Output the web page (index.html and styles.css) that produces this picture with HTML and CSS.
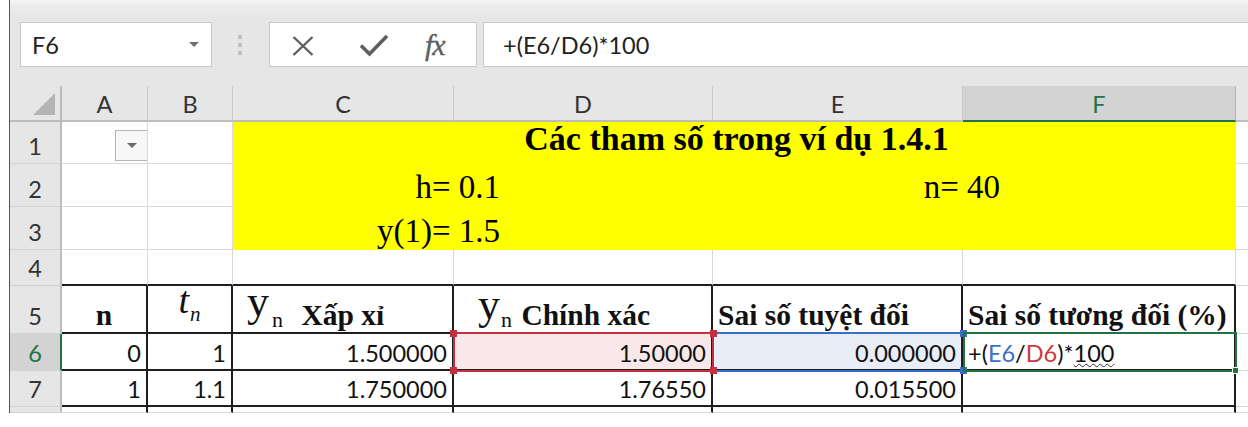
FILE: index.html
```html
<!DOCTYPE html>
<html lang="vi">
<head>
<meta charset="utf-8">
<title>Sai số tương đối</title>
<link rel="stylesheet" href="styles.css">
</head>
<body>
<div class="app">
  <div class="fbar">
    <div class="namebox"><span class="nb-text">F6</span><span class="nb-arrow"></span></div>
    <div class="grip"><i></i><i></i><i></i></div>
    <div class="fnbox">
      <svg class="ic-x" width="24" height="22" viewBox="0 0 24 22"><path d="M2.5 2 L21.5 20 M21.5 2 L2.5 20"/></svg>
      <svg class="ic-ok" width="30" height="24" viewBox="0 0 30 24"><path d="M2 12.5 L10.5 21 L28 3"/></svg>
      <span class="fx">fx</span>
    </div>
    <div class="formula">+(E6/D6)*100</div>
  </div>
  <div class="sheet">
    <div class="corner"><span class="tri"></span></div>
    <div class="ch">A</div>
    <div class="ch">B</div>
    <div class="ch">C</div>
    <div class="ch">D</div>
    <div class="ch">E</div>
    <div class="ch sel">F</div>
    <div class="ch"></div>

    <div class="rh">1</div>
    <div class="c dd-cell"><span class="dd"><span class="dd-tri"></span></span></div>
    <div class="c"></div>
    <div class="yellow">
      <div class="y-title">Các tham số trong ví dụ 1.4.1</div>
      <div class="y-cell">h= 0.1</div>
      <div class="y-cell">n= 40</div>
      <div class="y-cell y-low">y(1)= 1.5</div>
    </div>
    <div class="c"></div>

    <div class="rh">2</div>
    <div class="c"></div>
    <div class="c"></div>
    <div class="c"></div>

    <div class="rh">3</div>
    <div class="c"></div>
    <div class="c"></div>
    <div class="c"></div>

    <div class="rh">4</div>
    <div class="c bb"></div>
    <div class="c bb"></div>
    <div class="c bb"></div>
    <div class="c bb"></div>
    <div class="c bb"></div>
    <div class="c bb"></div>
    <div class="c"></div>

    <div class="rh">5</div>
    <div class="c bb br hd center"><span class="txt"><b>n</b></span></div>
    <div class="c bb br hd center"><span class="txt"><span class="t-it">t</span><span class="t-sub">n</span></span></div>
    <div class="c bb br hd left pad-y"><span class="txt"><span class="ybig">y</span><span class="ysub ysub-wide">n</span> <b>Xấp xỉ</b></span></div>
    <div class="c bb br hd left pad-y2"><span class="txt"><span class="ybig ybig2">y</span><span class="ysub">n</span> <b>Chính xác</b></span></div>
    <div class="c bb br hd left"><span class="txt"><b>Sai số tuyệt đối</b></span></div>
    <div class="c bb br hd left"><span class="txt"><b>Sai số tương đối (%)</b></span></div>
    <div class="c"></div>

    <div class="rh sel">6</div>
    <div class="c bb br">0</div>
    <div class="c bb br">1</div>
    <div class="c bb br">1.500000</div>
    <div class="c bb br pink">1.50000</div>
    <div class="c bb br bluebg">0.000000</div>
    <div class="c bb br left"><span class="txt">+(<span class="ref-e">E6</span>/<span class="ref-d">D6</span>)*<span class="wavy">100</span></span></div>
    <div class="c"></div>

    <div class="rh">7</div>
    <div class="c bb br">1</div>
    <div class="c bb br">1.1</div>
    <div class="c bb br">1.750000</div>
    <div class="c bb br">1.76550</div>
    <div class="c bb br">0.015500</div>
    <div class="c bb br"></div>
    <div class="c"></div>

    <div class="rh"></div>
    <div class="c br"></div>
    <div class="c br"></div>
    <div class="c br"></div>
    <div class="c br"></div>
    <div class="c br"></div>
    <div class="c br"></div>
    <div class="c"></div>

    <div class="hl hl-blue"><i class="sq sq-tr"></i><i class="sq sq-br"></i></div>
    <div class="hl hl-red"><i class="sq sq-tl"></i><i class="sq sq-tr"></i><i class="sq sq-bl"></i><i class="sq sq-br"></i></div>
    <div class="hl hl-green"><i class="handle"></i></div>
  </div>
</div>
</body>
</html>
```

FILE: styles.css
```css
* { box-sizing: border-box; }

body {
  margin: 0;
  background: #ffffff;
  font-family: Lato, "Liberation Sans", sans-serif;
  color: #111;
}

.app {
  margin-left: 9px;
  width: 1239px;
  height: 413px;
  border-left: 1px solid #217346;
  overflow: hidden;
  background: #e6e6e6;
}

/* ---------- formula bar ---------- */
.fbar {
  height: 86px;
  display: flex;
  align-items: flex-start;
  padding-top: 22px;
  background: linear-gradient(#f4f4f4 0, #ebebeb 6px, #e6e6e6 20px);
}

.namebox {
  margin-left: 10px;
  flex: none;
  width: 192px;
  height: 45px;
  background: #fff;
  border: 1px solid #c8c8c8;
  display: flex;
  align-items: center;
  justify-content: space-between;
  padding: 0 12px 0 11px;
  font-size: 23.5px;
  line-height: 28px;
  color: #222;
}

.nb-arrow {
  width: 0;
  height: 0;
  border-left: 5px solid transparent;
  border-right: 5px solid transparent;
  border-top: 5px solid #707070;
}

.grip {
  margin-left: 26px;
  flex: none;
  width: 5px;
  padding-top: 13px;
  display: flex;
  flex-direction: column;
  gap: 4px;
}

.grip i {
  display: block;
  width: 4px;
  height: 4px;
  background: #bfbfbf;
}

.fnbox {
  margin-left: 26px;
  flex: none;
  width: 208px;
  height: 45px;
  background: #fff;
  border: 1px solid #c8c8c8;
  display: flex;
  align-items: center;
}

.ic-x {
  margin-left: 21px;
  margin-top: 3px;
  fill: none;
  stroke: #5e5e5e;
  stroke-width: 2.4;
}

.ic-ok {
  margin-left: 44px;
  margin-top: 1px;
  fill: none;
  stroke: #5e5e5e;
  stroke-width: 3.6;
}

.fx {
  margin-left: 36px;
  font-family: "Liberation Serif", serif;
  font-style: italic;
  font-size: 30px;
  line-height: 30px;
  color: #5f5f5f;
  letter-spacing: -1px;
  -webkit-text-stroke: 0.4px #5f5f5f;
}

.formula {
  margin-left: 6px;
  flex: none;
  width: 900px;
  height: 45px;
  background: #fff;
  border: 1px solid #c8c8c8;
  display: flex;
  align-items: center;
  padding-left: 19px;
  font-size: 23.5px;
  line-height: 28px;
  color: #222;
}

/* ---------- sheet grid ---------- */
.sheet {
  position: relative;
  display: grid;
  grid-template-columns: 52px 86px 85px 221px 259px 250px 273px 100px;
  grid-template-rows: 36px 42px 43px 43px 36px 48px 37px 36px 6px;
  width: 1326px;
  background: #fff;
}

.corner {
  background: #e6e6e6;
  border-right: 2px solid #bcbcbc;
  border-bottom: 2px solid #bcbcbc;
  display: flex;
  justify-content: flex-end;
  align-items: flex-end;
  padding: 0 5px 5px 0;
}

.tri {
  width: 0;
  height: 0;
  border-left: 22px solid transparent;
  border-bottom: 22px solid #b4b4b4;
}

.ch {
  background: #e6e6e6;
  border-right: 1px solid #c9c9c9;
  border-bottom: 2px solid #bcbcbc;
  display: flex;
  justify-content: center;
  align-items: flex-end;
  padding-bottom: 2px;
  font-size: 23.5px;
  line-height: 28px;
  color: #333;
}

.ch.sel {
  background: #d3d3d3;
  color: #217346;
  border-right-color: #b2b2b2;
  border-bottom-color: #217346;
}

.rh {
  background: #e6e6e6;
  border-right: 2px solid #bcbcbc;
  border-bottom: 1px solid #d2d2d2;
  display: flex;
  justify-content: center;
  align-items: flex-end;
  padding-bottom: 3px;
  font-size: 23.5px;
  line-height: 28px;
  color: #333;
}

.rh.sel {
  background: #d3d3d3;
  color: #217346;
  border-right-color: #217346;
}

.c {
  background: #fff;
  border-right: 1px solid #d9d9d9;
  border-bottom: 1px solid #d9d9d9;
  display: flex;
  justify-content: flex-end;
  align-items: flex-end;
  padding: 0 5px 3px 5px;
  font-size: 23.5px;
  line-height: 28px;
  color: #111;
  white-space: nowrap;
}

.c.bb { border-bottom: 2px solid #1e1e1e; padding-bottom: 2px; }
.c.br { border-right: 2px solid #1e1e1e; }
.c.left { justify-content: flex-start; }
.c.center { justify-content: center; }
.c.pink { background: #f9e8e9; }
.c.bluebg { background: #e8edf7; }

.dd-cell {
  padding: 8px 0 0 0;
  align-items: flex-start;
}

.dd {
  width: 32px;
  height: 31px;
  background: #f7f7f7;
  border: 1px solid #b4b4b4;
  border-right: none;
  display: flex;
  align-items: center;
  justify-content: center;
}

.dd-tri {
  width: 0;
  height: 0;
  border-left: 5px solid transparent;
  border-right: 5px solid transparent;
  border-top: 5px solid #6a6a6a;
}

/* ---------- yellow title block ---------- */
.yellow {
  grid-column: 4 / 8;
  grid-row: 2 / 5;
  background: #ffff00;
  display: grid;
  grid-template-columns: 267px 500px 1fr;
  grid-template-rows: 42px 43px 43px;
  font-family: "Liberation Serif", serif;
  font-size: 33px;
  line-height: 38px;
  color: #000;
}

.y-title {
  grid-column: 1 / -1;
  text-align: center;
  font-weight: bold;
  font-size: 34px;
  align-self: end;
  padding-bottom: 6px;
  padding-left: 4px;
}

.y-cell {
  justify-self: end;
  align-self: end;
  padding-bottom: 1px;
}

.y-low {
  grid-column: 1;
  padding-bottom: 0;
}

/* ---------- header row 5 ---------- */
.hd {
  font-family: "Liberation Serif", serif;
  font-size: 29.5px;
  line-height: 30px;
  padding-bottom: 2px;
}

.hd b { font-weight: bold; }

.pad-y { padding-left: 14px; }
.pad-y2 { padding-left: 24px; }

.ybig {
  font-size: 44px;
  line-height: 0;
  vertical-align: 9px;
}

.ybig2 { vertical-align: 6px; }

.ysub {
  font-size: 22px;
  line-height: 0;
  vertical-align: -2px;
  margin-left: 1px;
  margin-right: 2px;
}

.ysub-wide { margin-left: 3px; margin-right: 11px; }

.t-it {
  font-style: italic;
  font-size: 38px;
  line-height: 0;
  vertical-align: 12px;
}

.t-sub {
  font-style: italic;
  font-size: 21px;
  line-height: 0;
  vertical-align: 4px;
  margin-left: 1px;
}

/* ---------- formula in F6 ---------- */
.ref-e { color: #3e6ec8; }
.ref-d { color: #d0383f; }

.wavy {
  text-decoration: underline wavy #333;
  text-decoration-thickness: 1.2px;
  text-underline-offset: 1px;
}

/* ---------- selection highlights (overlay) ---------- */
.hl {
  position: absolute;
  top: 246px;
  height: 40px;
}

.hl-blue {
  left: 703px;
  width: 250px;
  border-top: 2px solid #3b6cc6;
  border-bottom: 2px solid #3b6cc6;
}

.hl-red {
  left: 443px;
  width: 261px;
  border: 2px solid #c4303b;
}

.hl-green {
  left: 953px;
  width: 274px;
  border: 2px solid #217346;
}

.sq {
  position: absolute;
  width: 7px;
  height: 7px;
}

.hl-red .sq { background: #c4303b; }
.hl-blue .sq { background: #3b6cc6; }

.sq-tl { left: -5px; top: -4px; }
.sq-tr { right: -5px; top: -4px; }
.sq-bl { left: -5px; bottom: -4px; }
.sq-br { right: -5px; bottom: -4px; }

.hl-blue .sq-tr, .hl-blue .sq-br { right: -4px; }

.handle {
  position: absolute;
  right: -4px;
  bottom: -4px;
  width: 7px;
  height: 7px;
  background: #217346;
  border: 1px solid #fff;
}
```
